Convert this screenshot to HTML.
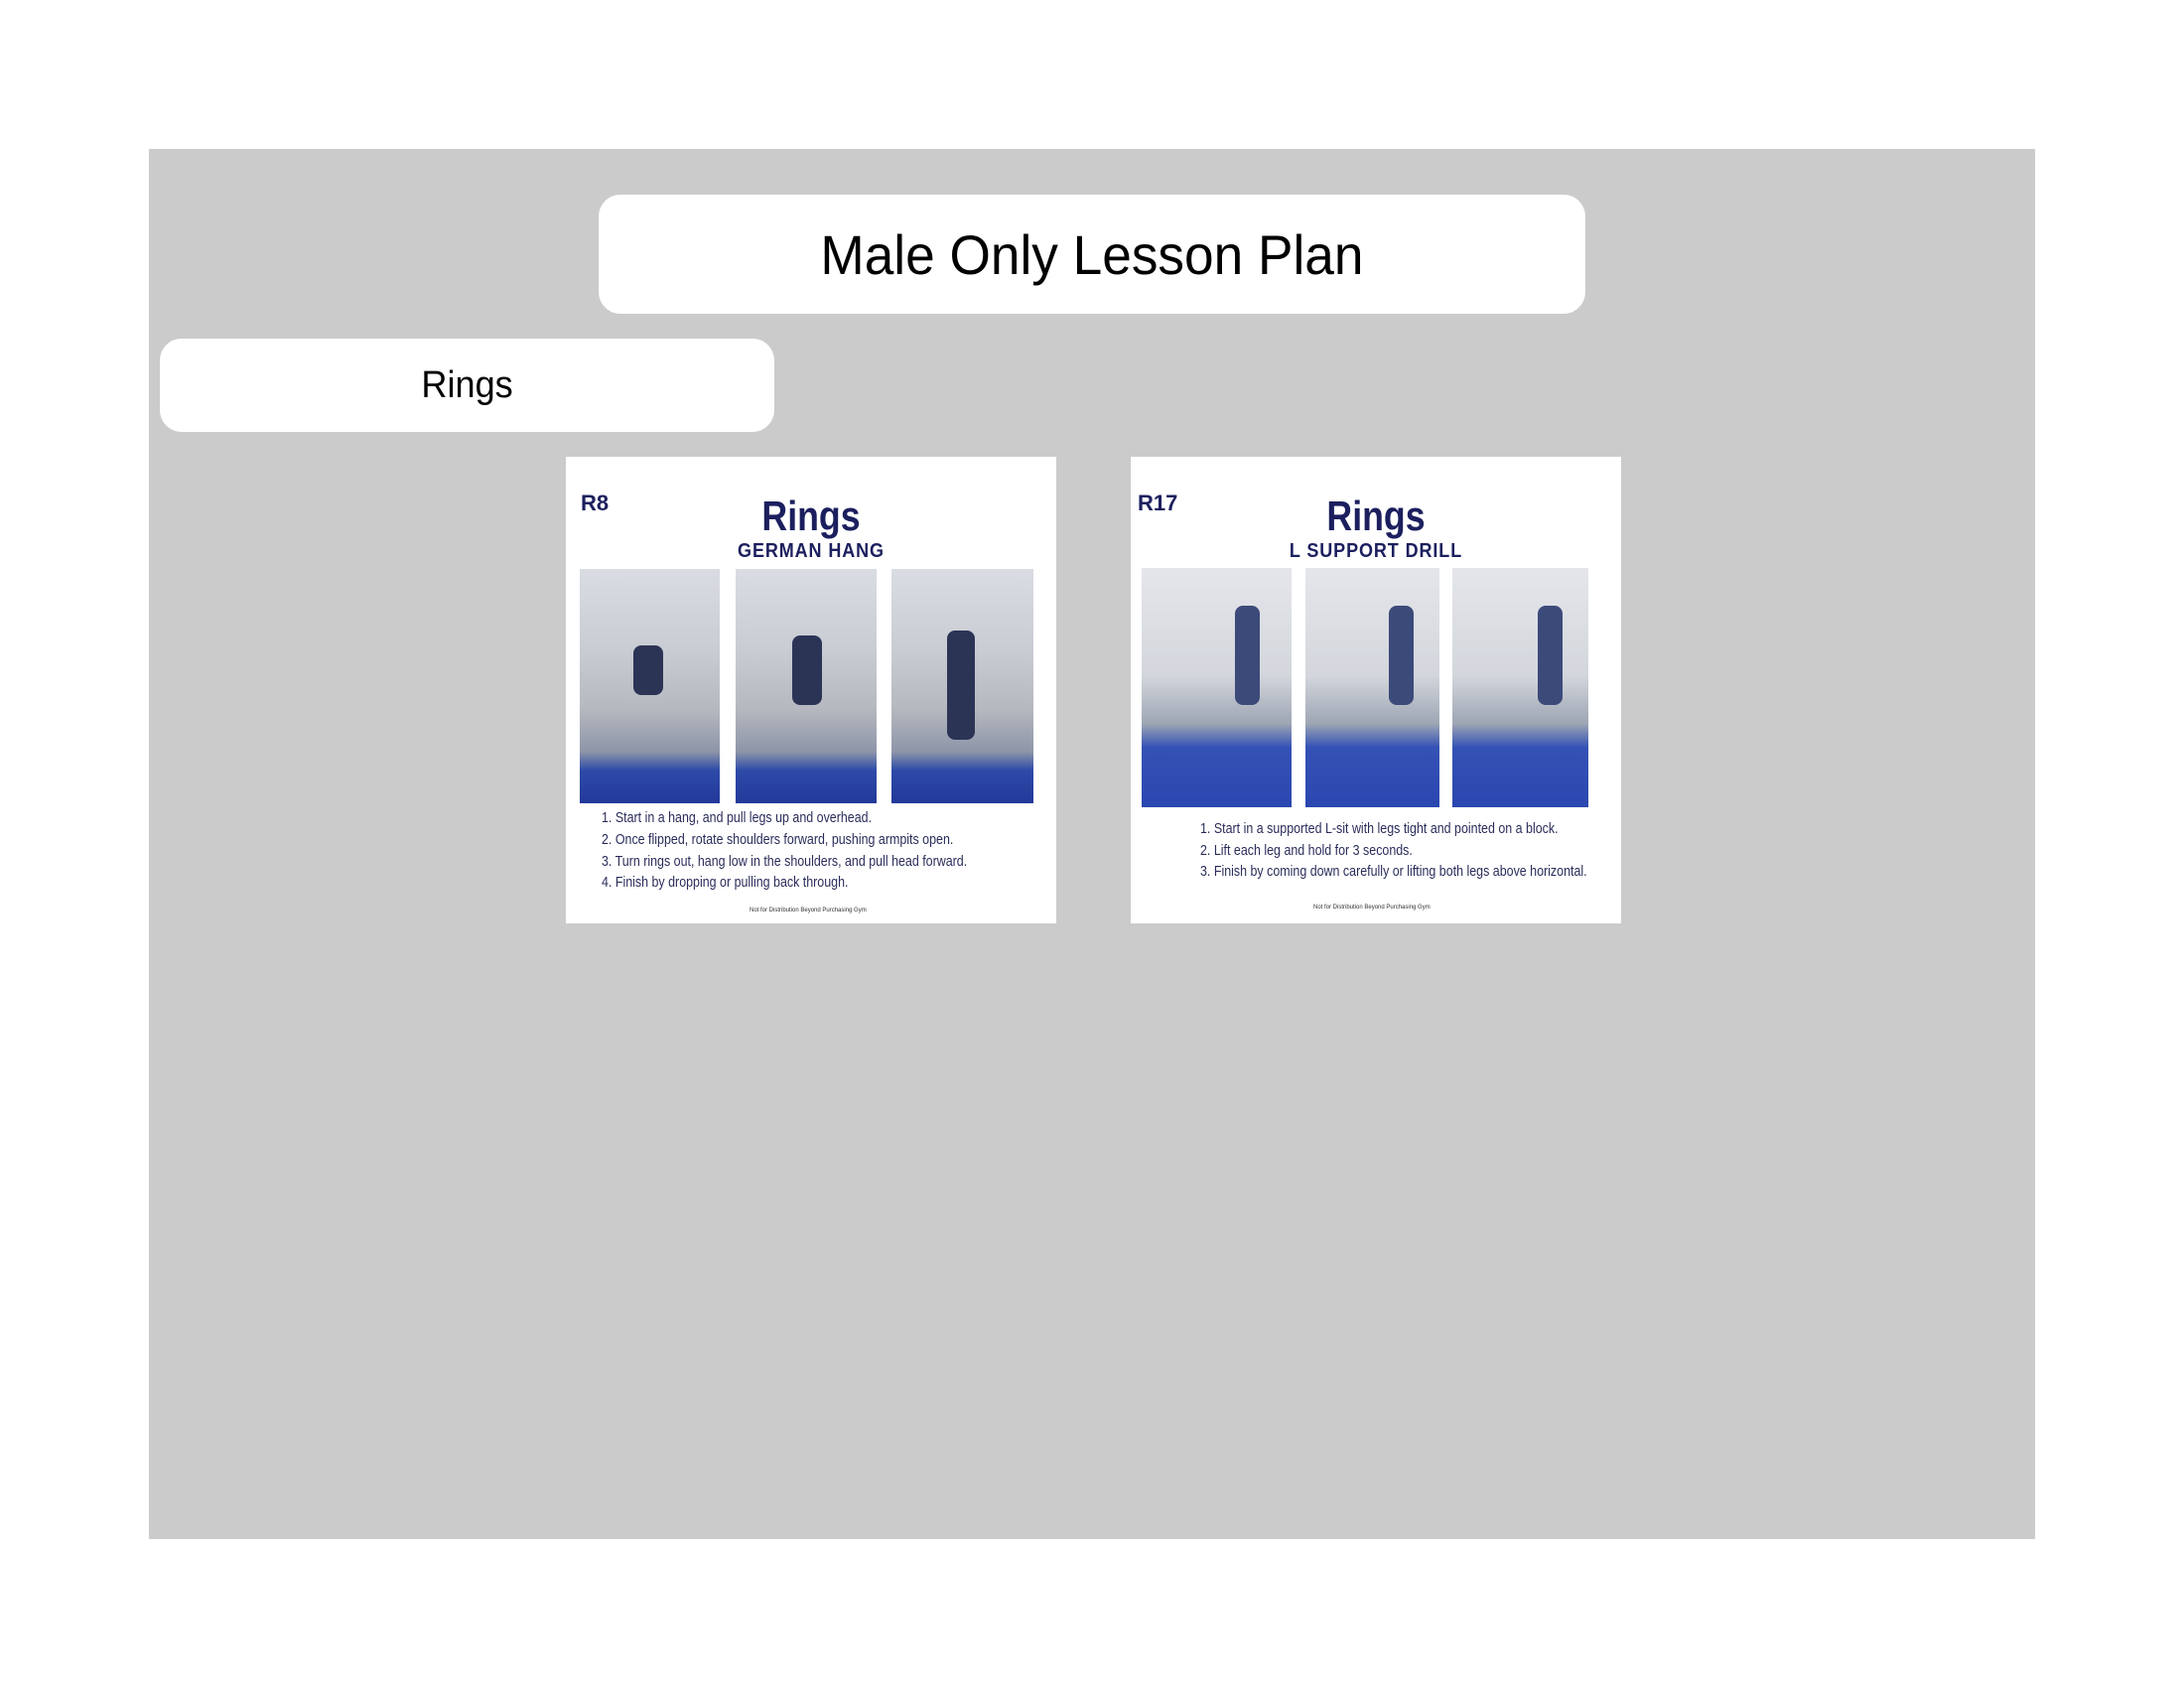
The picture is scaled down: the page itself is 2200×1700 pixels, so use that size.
<!DOCTYPE html>
<html><head><meta charset="utf-8"><style>
body{margin:0;width:2200px;height:1700px;background:#fff;position:relative;font-family:"Liberation Sans",sans-serif;overflow:hidden}
.gray{position:absolute;left:150px;top:150px;width:1900px;height:1400px;background:#cbcbcb}
.box{position:absolute;background:#fff;border-radius:22px;display:flex;align-items:center;justify-content:center;color:#000}
.card{position:absolute;top:460px;width:494px;height:470px;background:#fff}
.a{position:absolute;color:#1c1f5e;white-space:nowrap}
.ph{position:absolute;background:linear-gradient(180deg,#d9dce2 0%,#c9ccd3 35%,#b5b8be 60%,#8d95a8 78%,#2d4aa8 86%,#23399a 100%)}
.ph2{position:absolute;background:linear-gradient(180deg,#e4e6ea 0%,#d3d6dc 45%,#9ea6b4 65%,#3452b5 75%,#2a47b0 100%)}
.fig{position:absolute;background:#2c3456;border-radius:8px}
.li{position:absolute;font-size:15px;color:#2a2d5a;white-space:nowrap;transform:scaleX(.83);transform-origin:left}
.ft{position:absolute;font-size:6px;color:#333;white-space:nowrap}
</style></head><body>
<div class="gray"></div>
<div class="box" style="left:603px;top:196px;width:994px;height:120px;font-size:56px"><span style="display:inline-block;transform:scaleX(.95)">Male Only Lesson Plan</span></div>
<div class="box" style="left:161px;top:341px;width:619px;height:94px;font-size:38px"><span style="display:inline-block;transform:scaleX(.95)">Rings</span></div>

<div class="card" style="left:570px">
 <div class="a" style="left:15px;top:34px;font-size:22px;font-weight:bold">R8</div>
 <div class="a" style="left:0;width:494px;text-align:center;top:36px;font-size:42px;font-weight:bold;transform:scaleX(.85)">Rings</div>
 <div class="a" style="left:0;width:494px;text-align:center;top:84px;font-size:20px;font-weight:bold;letter-spacing:1px;transform:scaleX(.9)">GERMAN HANG</div>
 <div class="ph" style="left:14px;top:113px;width:141px;height:236px"></div>
 <div class="ph" style="left:171px;top:113px;width:142px;height:236px"></div>
 <div class="ph" style="left:328px;top:113px;width:143px;height:236px"></div>
 <div class="fig" style="left:68px;top:190px;width:30px;height:50px"></div>
 <div class="fig" style="left:228px;top:180px;width:30px;height:70px"></div>
 <div class="fig" style="left:384px;top:175px;width:28px;height:110px"></div>
 <div class="li" style="left:36px;top:355px">1. Start in a hang, and pull legs up and overhead.</div>
 <div class="li" style="left:36px;top:377px">2. Once flipped, rotate shoulders forward, pushing armpits open.</div>
 <div class="li" style="left:36px;top:399px">3. Turn rings out, hang low in the shoulders, and pull head forward.</div>
 <div class="li" style="left:36px;top:420px">4. Finish by dropping or pulling back through.</div>
 <div class="ft" style="left:185px;top:454px">Not for Distribution Beyond Purchasing Gym</div>
</div>

<div class="card" style="left:1139px">
 <div class="a" style="left:7px;top:34px;font-size:22px;font-weight:bold">R17</div>
 <div class="a" style="left:0;width:494px;text-align:center;top:36px;font-size:42px;font-weight:bold;transform:scaleX(.85)">Rings</div>
 <div class="a" style="left:0;width:494px;text-align:center;top:84px;font-size:20px;font-weight:bold;letter-spacing:1px;transform:scaleX(.9)">L SUPPORT DRILL</div>
 <div class="ph2" style="left:11px;top:112px;width:151px;height:241px"></div>
 <div class="ph2" style="left:176px;top:112px;width:135px;height:241px"></div>
 <div class="ph2" style="left:324px;top:112px;width:137px;height:241px"></div>
 <div class="fig" style="left:105px;top:150px;width:25px;height:100px;background:#3c4a7a"></div>
 <div class="fig" style="left:260px;top:150px;width:25px;height:100px;background:#3c4a7a"></div>
 <div class="fig" style="left:410px;top:150px;width:25px;height:100px;background:#3c4a7a"></div>
 <div class="li" style="left:70px;top:366px">1. Start in a supported L-sit with legs tight and pointed on a block.</div>
 <div class="li" style="left:70px;top:388px">2. Lift each leg and hold for 3 seconds.</div>
 <div class="li" style="left:70px;top:409px">3. Finish by coming down carefully or lifting both legs above horizontal.</div>
 <div class="ft" style="left:184px;top:451px">Not for Distribution Beyond Purchasing Gym</div>
</div>
</body></html>
